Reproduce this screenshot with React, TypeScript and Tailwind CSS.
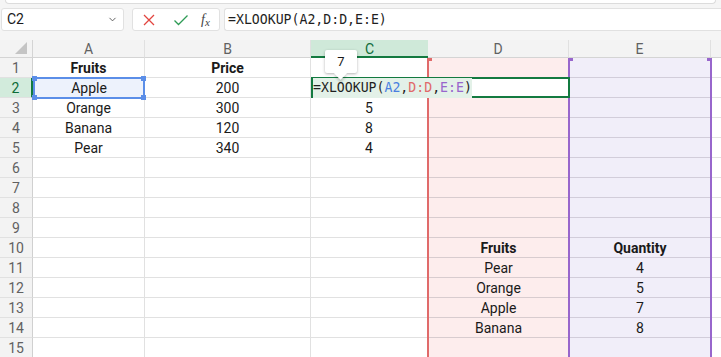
import { ChevronDown } from 'lucide-react';

const font = { fontFamily: 'Roboto, "Liberation Sans", sans-serif' };

const colA = ['Fruits', 'Apple', 'Orange', 'Banana', 'Pear'];
const colB = ['Price', '200', '300', '120', '340'];
const colC = ['', '', '5', '8', '4'];
const colD: Record<number, string> = { 10: 'Fruits', 11: 'Pear', 12: 'Orange', 13: 'Apple', 14: 'Banana' };
const colE: Record<number, string> = { 10: 'Quantity', 11: '4', 12: '5', 13: '7', 14: '8' };

const rows = Array.from({ length: 15 }, (_, i) => i + 1);

const gridCls = 'grid grid-cols-[33px_112px_166px_117px_141px_142px_1fr] grid-rows-[18px_repeat(15,20px)]';

function Formula() {
  return (
    <span className="bg-[#e3f1e8] font-['DejaVu_Sans_Mono',monospace] text-[13.2px] text-[#1f1f1f]">
      =XLOOKUP(<span className="text-[#4a7fe0]">A2</span>,<span className="text-[#e06a6a]">D:D</span>,
      <span className="text-[#9866cc]">E:E</span>)
    </span>
  );
}

export default function App() {
  return (
    <div className="w-[721px] h-[357px] overflow-hidden bg-[#f5f5f5] text-[#1a1a1a]" style={font}>
      {/* ribbon edge */}
      <div className="mx-[5px] h-[4px] bg-white border border-t-0 border-[#dcdcdc] rounded-b-[6px]" />

      {/* formula bar */}
      <div className="flex items-center mt-[4px] h-[23px]">
        <div className="ml-[1px] w-[123px] h-full bg-white border border-[#e1e1e1] rounded-[3px] flex items-center justify-between pl-[5px] pr-[5px]">
          <span className="text-[14px]">C2</span>
          <ChevronDown className="w-[11px] h-[11px] text-[#555]" strokeWidth={2} />
        </div>
        <div className="ml-[8px] w-[88px] h-full bg-white border border-[#e1e1e1] rounded-[3px] flex items-center pl-[9px]">
          <svg width="14" height="14" viewBox="0 0 14 14">
            <path d="M2 2 L12 12 M12 2 L2 12" stroke="#e2453f" strokeWidth="1.3" />
          </svg>
          <svg className="ml-[17px]" width="16" height="14" viewBox="0 0 16 14">
            <path d="M1.5 7.5 L5.5 11.5 L14.5 2.5" stroke="#2e9b55" strokeWidth="1.3" fill="none" />
          </svg>
          <span className="ml-[12px] italic text-[14px] text-[#444] font-['Liberation_Serif',serif]">
            f<span className="text-[11px] relative top-[2px]">x</span>
          </span>
        </div>
        <div className="ml-[4px] flex-1 h-full bg-white border border-r-0 border-[#e1e1e1] rounded-l-[3px] flex items-center pl-[3px]">
          <span className="font-['DejaVu_Sans_Mono',monospace] text-[13.2px] text-[#1f1f1f]">=XLOOKUP(A2,D:D,E:E)</span>
        </div>
      </div>

      {/* sheet */}
      <div className="relative mt-[9px] bg-white">
        <div className={gridCls}>
          {/* header row */}
          <div className="bg-[#f3f3f3] border-b border-r border-[#d4d4d4] flex items-end justify-end pr-[5px] pb-[3px]">
            <svg width="12" height="12" viewBox="0 0 12 12">
              <path d="M12 0 L12 12 L0 12 Z" fill="#c4c4c4" />
            </svg>
          </div>
          {['A', 'B'].map((c) => (
            <div key={c} className="bg-[#f3f3f3] border-b border-[#d4d4d4] border-r border-r-[#e0e0e0] flex items-center justify-center pt-[2px] text-[14px] text-[#616161]">
              {c}
            </div>
          ))}
          <div className="bg-[#cfe9d9] border-b-2 border-[#137a40] flex items-center justify-center pt-[2px] text-[14px] text-[#0e6b38]">C</div>
          {['D', 'E'].map((c) => (
            <div key={c} className="bg-[#f3f3f3] border-b border-[#d4d4d4] border-r border-r-[#e0e0e0] flex items-center justify-center pt-[2px] text-[14px] text-[#616161]">
              {c}
            </div>
          ))}
          <div className="bg-[#f3f3f3] border-b border-[#d4d4d4]" />

          {rows.map((r) => {
            const sel = r === 2;
            return [
              <div
                key={`h${r}`}
                className={
                  sel
                    ? 'bg-[#d2ebdc] border-b border-[#e1e1e1] border-r-2 border-r-[#137a40] flex items-center justify-center pt-[2px] text-[14px] text-[#0e6b38]'
                    : 'bg-[#f3f3f3] border-b border-[#e1e1e1] border-r border-r-[#d0d0d0] flex items-center justify-center pt-[2px] text-[14px] text-[#616161]'
                }
              >
                {r}
              </div>,
              sel ? (
                <div key={`a${r}`} className="relative bg-[#edf2fc] border-2 border-[#5b8ee8] flex items-center justify-center pt-[1px] text-[14px] -mt-[1px] mb-[-1px]">
                  {colA[r - 1]}
                  <span className="absolute -left-[3px] -top-[3px] w-[5px] h-[5px] bg-[#5b8ee8]" />
                  <span className="absolute -right-[3px] -top-[3px] w-[5px] h-[5px] bg-[#5b8ee8]" />
                  <span className="absolute -left-[3px] -bottom-[3px] w-[5px] h-[5px] bg-[#5b8ee8]" />
                  <span className="absolute -right-[3px] -bottom-[3px] w-[5px] h-[5px] bg-[#5b8ee8]" />
                </div>
              ) : (
                <div key={`a${r}`} className={`border-b border-r border-[#e1e1e1] flex items-center justify-center pt-[2px] text-[14px] ${r === 1 ? 'font-bold' : ''}`}>
                  {colA[r - 1] ?? ''}
                </div>
              ),
              <div key={`b${r}`} className={`border-b border-r border-[#e1e1e1] flex items-center justify-center pt-[2px] text-[14px] ${r === 1 ? 'font-bold' : ''}`}>
                {colB[r - 1] ?? ''}
              </div>,
              <div key={`c${r}`} className="border-b border-r border-[#e1e1e1] flex items-center justify-center pt-[2px] text-[14px]">
                {colC[r - 1] ?? ''}
              </div>,
              <div key={`d${r}`} className={`bg-[#fdeded] border-b border-[#d8cccf] flex items-center justify-center pt-[2px] text-[14px] ${r === 10 ? 'font-bold' : ''}`}>
                {colD[r] ?? ''}
              </div>,
              <div key={`e${r}`} className={`bg-[#f1eef9] border-b border-[#d2cdda] flex items-center justify-center pt-[2px] text-[14px] ${r === 10 ? 'font-bold' : ''}`}>
                {colE[r] ?? ''}
              </div>,
              <div key={`f${r}`} className="border-b border-l border-[#e1e1e1]" />,
            ];
          })}
        </div>

        {/* overlay layer: reference ranges, edited cell, tooltip */}
        <div className={`absolute inset-0 pointer-events-none ${gridCls}`}>
          <div className="col-start-5 row-start-2 row-end-17 relative border-l-2 border-[#e06a6a] -ml-[1px]">
            <span className="absolute -left-[2px] top-0 w-[5px] h-[3px] bg-[#e06a6a]" />
          </div>
          <div className="col-start-6 row-start-2 row-end-17 relative border-x-2 border-[#9866cc] -ml-[1px] -mr-[1px]">
            <span className="absolute -left-[2px] top-0 w-[5px] h-[3px] bg-[#9866cc]" />
            <span className="absolute -right-[2px] top-0 w-[5px] h-[3px] bg-[#9866cc]" />
          </div>

          <div className="col-start-4 col-end-6 row-start-3 row-end-4 relative bg-white border-2 border-[#137a40] -mt-[1px] mr-[-1px] flex items-center pt-[1px]">
            <Formula />
            <div className="absolute left-[12px] -top-[29px] w-[32px] h-[23px] bg-white rounded-[2px] shadow-[0_1px_3px_rgba(0,0,0,0.3)] flex items-center justify-center text-[13px]">
              7
              <span className="absolute left-[11px] -bottom-[5px] w-[9px] h-[9px] bg-white rotate-45 shadow-[2px_2px_2px_rgba(0,0,0,0.15)]" />
            </div>
          </div>
        </div>
      </div>
    </div>
  );
}
